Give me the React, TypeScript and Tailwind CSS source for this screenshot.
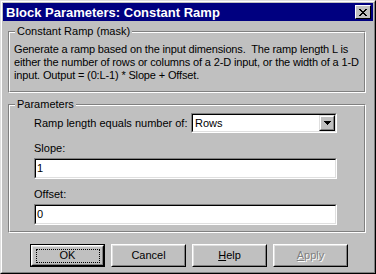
import React from "react";

const FONT = { fontFamily: '"Liberation Sans", Arial, sans-serif' };

function Etched({ label, className, children }: { label: string; className?: string; children: React.ReactNode }) {
    return (
        <div className={`relative border border-t-[#808080] border-l-[#808080] border-r-white border-b-white ${className ?? ""}`}>
            <div className="h-full border border-t-white border-l-white border-r-[#808080] border-b-[#808080]">
                {children}
            </div>
            {/* legend sits over the top edge */}
            <span className="absolute left-[6px] top-[-7px] bg-[#c0c0c0] px-[2px] text-[11px] leading-[13px] text-black">
                {label}
            </span>
        </div>
    );
}

function Sunken({ value }: { value: string }) {
    return (
        <div className="h-[21px] border border-t-[#808080] border-l-[#808080] border-r-white border-b-white">
            <div className="h-full border border-t-black border-l-black border-r-[#dfdfdf] border-b-[#dfdfdf] bg-white px-[1px] text-[11px] leading-[17px] text-black">
                {value}
            </div>
        </div>
    );
}

function Btn({ children, isDefault, disabled }: { children: React.ReactNode; isDefault?: boolean; disabled?: boolean }) {
    const face = (
        <div className="h-full border border-t-white border-l-white border-r-black border-b-black">
            <div className="h-full border border-t-[#dfdfdf] border-l-[#dfdfdf] border-r-[#808080] border-b-[#808080] flex items-center justify-center">
                {isDefault ? (
                    <span className="flex h-[14px] w-[64px] items-center justify-center border border-dotted border-black text-[11px] leading-[13px]">
                        {children}
                    </span>
                ) : (
                    <span
                        className={`text-[11px] leading-[13px] ${disabled ? "text-[#808080] [text-shadow:1px_1px_0_#fff]" : "text-black"}`}
                    >
                        {children}
                    </span>
                )}
            </div>
        </div>
    );
    return <div className={`h-[23px] w-[75px] ${isDefault ? "border border-black" : ""}`}>{face}</div>;
}

export default function App() {
    return (
        <div style={FONT} className="h-[274px] w-[376px] border border-t-[#dfdfdf] border-l-[#dfdfdf] border-r-black border-b-black bg-[#c0c0c0]">
            <div className="flex h-full flex-col border border-t-white border-l-white border-r-[#808080] border-b-[#808080] p-[1px]">
                {/* Title bar */}
                <div className="flex h-[18px] items-center justify-between bg-[#000080] pl-[3px] pr-[2px]">
                    <span className="text-[13px] font-bold leading-[15px] text-white">Block Parameters: Constant Ramp</span>
                    <div className="flex h-[14px] w-[16px] items-center justify-center border border-t-white border-l-white border-r-black border-b-black bg-[#c0c0c0]">
                        <svg width="8" height="7" viewBox="0 0 8 7" shapeRendering="crispEdges">
                            <path d="M0 0h2v1h-2zM6 0h2v1h-2zM1 1h2v1h-2zM5 1h2v1h-2zM2 2h4v1h-4zM3 3h2v1h-2zM2 4h4v1h-4zM1 5h2v1h-2zM5 5h2v1h-2zM0 6h2v1h-2zM6 6h2v1h-2z" fill="#000" />
                        </svg>
                    </div>
                </div>

                {/* Body */}
                <div className="flex flex-1 flex-col pl-[5px] pr-[7px] pt-[10px]">
                    <Etched label="Constant Ramp (mask)" className="h-[62px]">
                        <p className="whitespace-nowrap px-[4px] pt-[10px] text-[11px] leading-[13px] tracking-[-0.15px] text-black">
                            Generate a ramp based on the input dimensions.&nbsp; The ramp length L is
                            <br />
                            either the number of rows or columns of a 2-D input, or the width of a 1-D
                            <br />
                            input. Output = (0:L-1) * Slope + Offset.
                        </p>
                    </Etched>

                    <Etched label="Parameters" className="mt-[11px] h-[129px]">
                        <div className="flex flex-col pl-[24px] pr-[27px] pt-[7px] text-[11px] leading-[13px] text-black">
                            <div className="flex items-center justify-between">
                                <span>Ramp length equals number of:</span>
                                <div className="h-[20px] w-[146px] border border-t-[#808080] border-l-[#808080] border-r-white border-b-white">
                                    <div className="flex h-full items-center border border-t-black border-l-black border-r-[#dfdfdf] border-b-[#dfdfdf] bg-white">
                                        <span className="flex-1 pl-[2px]">Rows</span>
                                        <div className="h-[16px] w-[16px] border border-t-[#dfdfdf] border-l-[#dfdfdf] border-r-black border-b-black bg-[#c0c0c0]">
                                            <div className="flex h-full items-center justify-center border border-t-white border-l-white border-r-[#808080] border-b-[#808080]">
                                                <svg width="7" height="4" viewBox="0 0 7 4" shapeRendering="crispEdges">
                                                    <path d="M0 0h7v1h-7zM1 1h5v1h-5zM2 2h3v1h-3zM3 3h1v1h-1z" fill="#000" />
                                                </svg>
                                            </div>
                                        </div>
                                    </div>
                                </div>
                            </div>
                            <span className="mt-[9px]">Slope:</span>
                            <div className="mt-[3px]">
                                <Sunken value="1" />
                            </div>
                            <span className="mt-[9px]">Offset:</span>
                            <div className="mt-[3px]">
                                <Sunken value="0" />
                            </div>
                        </div>
                    </Etched>

                    {/* Buttons */}
                    <div className="mt-[11px] flex gap-[6px] pl-[22px]">
                        <Btn isDefault>OK</Btn>
                        <Btn>Cancel</Btn>
                        <Btn>
                            <span className="underline">H</span>elp
                        </Btn>
                        <Btn disabled>
                            <span className="underline">A</span>pply
                        </Btn>
                    </div>
                </div>
            </div>
        </div>
    );
}
